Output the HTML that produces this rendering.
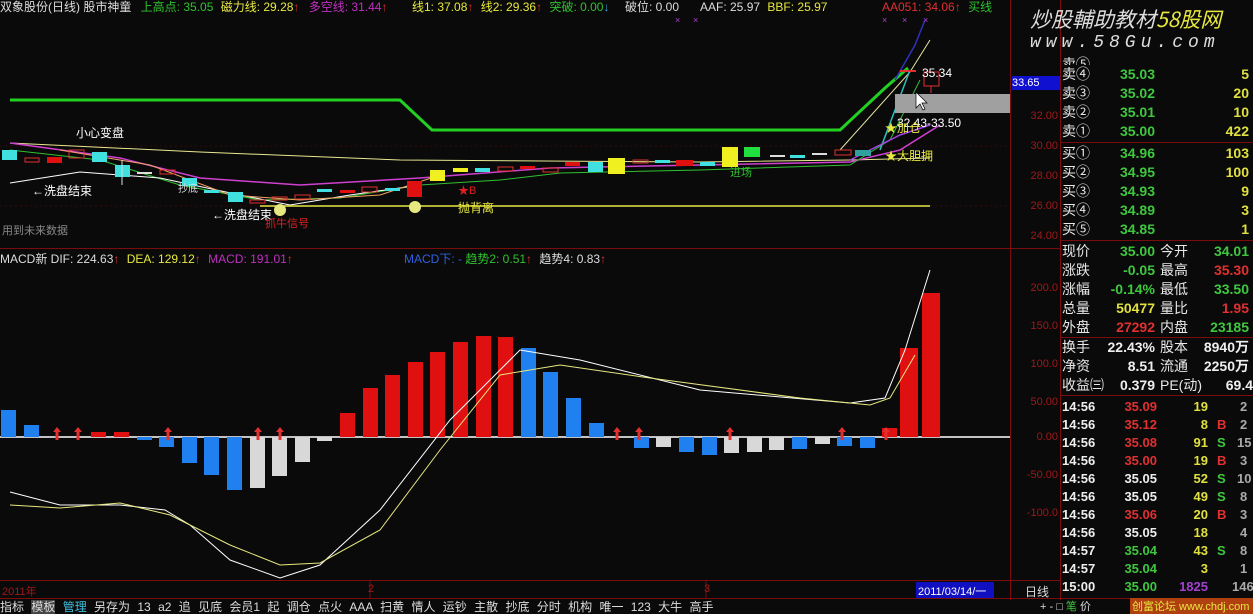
<!DOCTYPE html>
<html><head><meta charset="utf-8"><style>
*{margin:0;padding:0;box-sizing:border-box}
body{width:1253px;height:614px;background:#0a0a0a;overflow:hidden;position:relative;font-family:"Liberation Sans","Noto Sans CJK SC",sans-serif;font-size:12px;color:#ddd}
.a{position:absolute;white-space:nowrap}
.r{position:absolute;left:1062px;width:191px;height:19px;font-size:14px;line-height:19px}
.r span{position:absolute}
.lb{left:0;color:#e8e8e8}
.p{left:20px;width:73px;text-align:right;color:#3ec83e;font-weight:bold}
.v{right:4px;text-align:right;color:#e0e040;font-weight:bold}
.l2{left:98px;color:#e8e8e8}
.t{font-size:13px}
.t span{font-weight:bold}
.ax{position:absolute;left:1012px;width:46px;text-align:right;color:#a01818;font-size:11px}
</style></head><body>
<svg class="a" style="left:0;top:0" width="1253" height="614">
<g stroke="#3a0808" stroke-width="1">
<line x1="0" y1="146" x2="1010" y2="146" stroke-dasharray="2 3"/>
<line x1="0" y1="206" x2="1010" y2="206" stroke-dasharray="2 3"/>
</g>
<line x1="1010.5" y1="0" x2="1010.5" y2="600" stroke="#7a0c0c"/>
<line x1="1060.5" y1="0" x2="1060.5" y2="600" stroke="#7a0c0c"/>
<line x1="0" y1="248.5" x2="1060" y2="248.5" stroke="#7a0c0c"/>
<line x1="0" y1="580.5" x2="1060" y2="580.5" stroke="#7a0c0c"/>
<line x1="0" y1="598.5" x2="1253" y2="598.5" stroke="#7a0c0c"/>
<g stroke="#7a0c0c"><line x1="1060" y1="142.5" x2="1253" y2="142.5"/><line x1="1060" y1="240.5" x2="1253" y2="240.5"/><line x1="1060" y1="337.5" x2="1253" y2="337.5"/><line x1="1060" y1="395.5" x2="1253" y2="395.5"/></g>
<polyline fill="none" stroke="#22d022" stroke-width="3" points="10,100 400,100 432,130 840,130 885,88 908,68"/>
<polyline fill="none" stroke="#e8e890" stroke-width="1" points="10,143 200,152 400,160 700,162 850,160 930,158"/>
<polyline fill="none" stroke="#d040d0" stroke-width="1.5" points="10,143 120,158 200,178 300,185 420,178 550,168 700,165 850,162 900,150 940,125"/>
<polyline fill="none" stroke="#30c030" stroke-width="1" points="10,150 100,160 180,185 260,200 340,198 420,185 500,180 560,173 700,170 850,165 890,140 920,80"/>
<polyline fill="none" stroke="#ffffff" stroke-width="1" points="10,183 80,172 160,178 240,195 290,205 350,195 420,185"/>
<polyline fill="none" stroke="#f0a060" stroke-width="1" points="60,150 150,165 230,195 300,200 380,195 440,175"/>
<line x1="260" y1="206" x2="930" y2="206" stroke="#e8e840" stroke-width="1.5"/>
<polyline fill="none" stroke="#e8e8a0" stroke-width="1" points="840,150 910,72 930,40"/>
<polyline fill="none" stroke="#3030c0" stroke-width="1.5" points="895,80 915,45 925,20"/>
<polyline fill="none" stroke="#30c0c0" stroke-width="1.5" points="880,150 910,70"/>
<polyline fill="none" stroke="#a040e0" stroke-width="1.5" points="850,160 900,135 930,125"/>
<g>
<rect x="2" y="150" width="15" height="10" fill="#40e0e0"/>
<rect x="25" y="158" width="14" height="4" fill="none" stroke="#e03030"/>
<rect x="47" y="157" width="15" height="6" fill="#e01010"/>
<rect x="69" y="150" width="15" height="8" fill="none" stroke="#e03030"/>
<rect x="92" y="152" width="15" height="10" fill="#40e0e0"/>
<rect x="115" y="165" width="15" height="12" fill="#40e0e0"/>
<line x1="122" y1="160" x2="122" y2="185" stroke="#ddd"/>
<rect x="137" y="172" width="15" height="2" fill="#ddd"/>
<rect x="160" y="170" width="15" height="4" fill="none" stroke="#e03030"/>
<rect x="182" y="178" width="15" height="8" fill="#40e0e0"/>
<rect x="204" y="190" width="15" height="3" fill="#40e0e0"/>
<rect x="228" y="192" width="15" height="10" fill="#40e0e0"/>
<rect x="250" y="200" width="15" height="3" fill="none" stroke="#e03030"/>
<rect x="272" y="197" width="15" height="3" fill="none" stroke="#e03030"/>
<rect x="295" y="195" width="15" height="4" fill="none" stroke="#e03030"/>
<rect x="317" y="189" width="15" height="3" fill="#40e0e0"/>
<rect x="340" y="190" width="15" height="3" fill="#e01010"/>
<rect x="362" y="187" width="15" height="5" fill="none" stroke="#e03030"/>
<rect x="385" y="188" width="15" height="3" fill="#40e0e0"/>
<rect x="407" y="181" width="15" height="16" fill="#e01010"/>
<rect x="430" y="170" width="15" height="11" fill="#f0f020"/>
<rect x="453" y="168" width="15" height="4" fill="#f0f020"/>
<rect x="475" y="168" width="15" height="4" fill="#40e0e0"/>
<rect x="498" y="167" width="15" height="4" fill="none" stroke="#e03030"/>
<rect x="520" y="166" width="15" height="3" fill="#e01010"/>
<rect x="543" y="168" width="15" height="4" fill="none" stroke="#e03030"/>
<rect x="565" y="162" width="15" height="4" fill="#e01010"/>
<rect x="588" y="162" width="15" height="10" fill="#40e0e0"/>
<rect x="608" y="158" width="17" height="16" fill="#f0f020"/>
<rect x="633" y="160" width="15" height="3" fill="none" stroke="#e03030"/>
<rect x="655" y="160" width="15" height="3" fill="#40e0e0"/>
<rect x="676" y="160" width="17" height="6" fill="#e01010"/>
<rect x="700" y="162" width="15" height="4" fill="#40e0e0"/>
<rect x="722" y="147" width="16" height="20" fill="#f0f020"/>
<rect x="744" y="147" width="16" height="10" fill="#20e040"/>
<rect x="770" y="155" width="15" height="2" fill="#ddd"/>
<rect x="790" y="155" width="15" height="3" fill="#40e0e0"/>
<rect x="812" y="153" width="15" height="2" fill="#ddd"/>
<rect x="835" y="150" width="16" height="5" fill="none" stroke="#e03030"/>
<rect x="855" y="150" width="16" height="6" fill="#30a0a0"/>
<rect x="900" y="70" width="16" height="2" fill="#e03030"/>
<rect x="924" y="72" width="15" height="14" fill="none" stroke="#e03030"/>
<line x1="931" y1="86" x2="931" y2="93" stroke="#e03030"/>
</g>
<circle cx="280" cy="210" r="6" fill="#e8e880"/>
<circle cx="415" cy="207" r="6" fill="#e8e880"/>
<rect x="895" y="94" width="115" height="19" fill="#a0a0a0"/>
<path d="M916 92 L916 108 L920 104 L923 110 L925 109 L922 103 L927 103 Z" fill="#fff" stroke="#000" stroke-width=".7"/>
<g fill="#b040d0" font-size="9"><text x="675" y="23">×</text><text x="693" y="23">×</text><text x="882" y="23">×</text><text x="902" y="23">×</text><text x="923" y="23">×</text></g>
<line x1="0" y1="437" x2="1010" y2="437" stroke="#fff" stroke-width="1.5"/>
<g>
<rect x="1" y="410" width="15" height="27" fill="#2080f0"/>
<rect x="24" y="425" width="15" height="12" fill="#2080f0"/>
<rect x="91" y="432" width="15" height="5" fill="#e01010"/>
<rect x="114" y="432" width="15" height="5" fill="#e01010"/>
<rect x="137" y="437" width="15" height="3" fill="#2080f0"/>
<rect x="159" y="437" width="15" height="10" fill="#2080f0"/>
<rect x="182" y="437" width="15" height="26" fill="#2080f0"/>
<rect x="204" y="437" width="15" height="38" fill="#2080f0"/>
<rect x="227" y="437" width="15" height="53" fill="#2080f0"/>
<rect x="250" y="437" width="15" height="51" fill="#d8d8d8"/>
<rect x="272" y="437" width="15" height="39" fill="#d8d8d8"/>
<rect x="295" y="437" width="15" height="25" fill="#d8d8d8"/>
<rect x="317" y="437" width="15" height="4" fill="#d8d8d8"/>
<rect x="340" y="413" width="15" height="24" fill="#e01010"/>
<rect x="363" y="388" width="15" height="49" fill="#e01010"/>
<rect x="385" y="375" width="15" height="62" fill="#e01010"/>
<rect x="408" y="362" width="15" height="75" fill="#e01010"/>
<rect x="430" y="352" width="15" height="85" fill="#e01010"/>
<rect x="453" y="342" width="15" height="95" fill="#e01010"/>
<rect x="476" y="336" width="15" height="101" fill="#e01010"/>
<rect x="498" y="337" width="15" height="100" fill="#e01010"/>
<rect x="521" y="348" width="15" height="89" fill="#2080f0"/>
<rect x="543" y="372" width="15" height="65" fill="#2080f0"/>
<rect x="566" y="398" width="15" height="39" fill="#2080f0"/>
<rect x="589" y="423" width="15" height="14" fill="#2080f0"/>
<rect x="634" y="437" width="15" height="11" fill="#2080f0"/>
<rect x="656" y="437" width="15" height="10" fill="#d8d8d8"/>
<rect x="679" y="437" width="15" height="15" fill="#2080f0"/>
<rect x="702" y="437" width="15" height="18" fill="#2080f0"/>
<rect x="724" y="437" width="15" height="16" fill="#d8d8d8"/>
<rect x="747" y="437" width="15" height="15" fill="#d8d8d8"/>
<rect x="769" y="437" width="15" height="13" fill="#d8d8d8"/>
<rect x="792" y="437" width="15" height="12" fill="#2080f0"/>
<rect x="815" y="437" width="15" height="7" fill="#d8d8d8"/>
<rect x="837" y="437" width="15" height="9" fill="#2080f0"/>
<rect x="860" y="437" width="15" height="11" fill="#2080f0"/>
<rect x="882" y="428" width="15" height="9" fill="#e01010"/>
<rect x="900" y="348" width="18" height="89" fill="#e01010"/>
<rect x="922" y="293" width="18" height="144" fill="#e01010"/>
</g>
<g fill="#e03030"><path d="M53 432 l4-5 l4 5 h-2.5 v8 h-3 v-8z"/><path d="M74 432 l4-5 l4 5 h-2.5 v8 h-3 v-8z"/><path d="M164 432 l4-5 l4 5 h-2.5 v8 h-3 v-8z"/><path d="M254 432 l4-5 l4 5 h-2.5 v8 h-3 v-8z"/><path d="M276 432 l4-5 l4 5 h-2.5 v8 h-3 v-8z"/><path d="M613 432 l4-5 l4 5 h-2.5 v8 h-3 v-8z"/><path d="M635 432 l4-5 l4 5 h-2.5 v8 h-3 v-8z"/><path d="M726 432 l4-5 l4 5 h-2.5 v8 h-3 v-8z"/><path d="M838 432 l4-5 l4 5 h-2.5 v8 h-3 v-8z"/><path d="M882 432 l4-5 l4 5 h-2.5 v8 h-3 v-8z"/></g>
<polyline fill="none" stroke="#ffffff" stroke-width="1" points="10,492 60,505 120,505 165,510 190,525 230,560 280,578 320,565 380,510 450,420 520,350 580,360 700,390 850,403 885,398 905,350 930,270"/>
<polyline fill="none" stroke="#e8e880" stroke-width="1" points="10,505 60,508 120,503 170,515 230,545 280,565 320,563 380,530 440,450 500,375 560,365 650,378 800,398 870,405 890,398 915,355"/>
<g stroke="#7a0c0c"><line x1="370" y1="580" x2="370" y2="598"/><line x1="706" y1="580" x2="706" y2="598"/></g>
<rect x="916" y="582" width="78" height="16" fill="#1010c0"/>
</svg>

<div class="a" style="left:0;top:0;font-size:12px;line-height:14px">
<span style="color:#ddd">双象股份(日线) 股市神童</span>
<span style="color:#30c030;margin-left:6px">上高点: 35.05</span>
<span style="color:#e8e840;margin-left:4px">磁力线: 29.28</span><span style="color:#e03030">↑</span>
<span style="color:#c030c0;margin-left:6px">多空线: 31.44</span><span style="color:#e03030">↑</span>
</div>
<div class="a" style="left:412px;top:0;line-height:14px"><span style="color:#e8e840">线1: 37.08</span><span style="color:#e03030">↑</span> <span style="color:#e8e840;margin-left:4px">线2: 29.36</span><span style="color:#e03030">↑</span> <span style="color:#30c030;margin-left:4px">突破: 0.00</span><span style="color:#40a0e0">↓</span></div>
<div class="a" style="left:625px;top:0;line-height:14px;color:#ddd">破位: 0.00</div>
<div class="a" style="left:700px;top:0;line-height:14px"><span style="color:#ddd">AAF: 25.97</span> <span style="color:#e8e840;margin-left:4px">BBF: 25.97</span></div>
<div class="a" style="left:882px;top:0;line-height:14px"><span style="color:#e03030">AA051: 34.06</span><span style="color:#e03030">↑</span> <span style="color:#30c030;margin-left:4px">买</span><span style="color:#30c030">线</span></div>

<div class="a" style="left:76px;top:124px;color:#fff;font-size:12px">小心变盘</div>
<div class="a" style="left:32px;top:182px;color:#fff;font-size:12px">←洗盘结束</div>
<div class="a" style="left:212px;top:206px;color:#fff;font-size:12px">←洗盘结束</div>
<div class="a" style="left:265px;top:215px;color:#e02020;font-size:11px">抓牛信号</div>
<div class="a" style="left:178px;top:180px;color:#ddd;font-size:10px">抄底</div>
<div class="a" style="left:2px;top:222px;color:#888;font-size:11px">用到未来数据</div>
<div class="a" style="left:458px;top:182px;color:#e02020;font-size:11px">★B</div>
<div class="a" style="left:458px;top:199px;color:#e8e840;font-size:12px">抛背离</div>
<div class="a" style="left:730px;top:164px;color:#30c030;font-size:11px">进场</div>
<div class="a" style="left:922px;top:66px;color:#fff;font-size:12px">35.34</div>
<div class="a" style="left:897px;top:116px;color:#fff;font-size:12px">32.43-33.50</div>
<div class="a" style="left:885px;top:119px;color:#e8e840;font-size:12px">★加仓</div>
<div class="a" style="left:885px;top:147px;color:#e8e840;font-size:12px">★大胆拥</div>

<div class="a" style="left:0;top:252px;line-height:14px;font-size:12px"><span style="color:#ddd">MACD新 DIF: 224.63</span><span style="color:#e03030">↑</span> <span style="color:#e8e840;margin-left:4px">DEA: 129.12</span><span style="color:#e03030">↑</span> <span style="color:#c030c0;margin-left:4px">MACD: 191.01</span><span style="color:#e03030">↑</span></div>
<div class="a" style="left:404px;top:252px;line-height:14px"><span style="color:#3060e0">MACD下: -</span> <span style="color:#30c030">趋势2: 0.51</span><span style="color:#e03030">↑</span> <span style="color:#ddd;margin-left:4px">趋势4: 0.83</span><span style="color:#e03030">↑</span></div>

<div class="a" style="left:1012px;top:76px;width:48px;height:14px;background:#1010d0;color:#fff;font-size:11px;line-height:14px">33.65</div>
<div class="ax" style="top:110px">32.00</div><div class="ax" style="top:140px">30.00</div><div class="ax" style="top:170px">28.00</div><div class="ax" style="top:200px">26.00</div><div class="ax" style="top:230px">24.00</div>
<div class="ax" style="top:282px">200.0</div><div class="ax" style="top:320px">150.0</div><div class="ax" style="top:358px">100.0</div><div class="ax" style="top:396px">50.00</div><div class="ax" style="top:431px">0.00</div><div class="ax" style="top:469px">-50.00</div><div class="ax" style="top:507px">-100.0</div>
<div class="a" style="left:2px;top:583px;color:#a01818;font-size:11px">2011年</div>
<div class="a" style="left:368px;top:583px;color:#a01818;font-size:11px">2</div>
<div class="a" style="left:704px;top:583px;color:#a01818;font-size:11px">3</div>
<div class="a" style="left:918px;top:583px;color:#fff;font-size:11px">2011/03/14/一</div>
<div class="a" style="left:1025px;top:583px;color:#ddd;font-size:12px">日线</div>

<div class="a" style="left:1030px;top:4px;font-size:21px;font-style:italic;color:#ddd;font-family:'Noto Sans CJK SC',sans-serif">炒股輔助教材<span style="color:#e8e840">58股网</span></div>
<div class="a" style="left:1030px;top:33px;font-size:18px;font-style:italic;color:#ddd;letter-spacing:5px;font-family:'Liberation Mono',monospace">www.58Gu.com</div>

<div class="r" style="top:55px;height:10px;overflow:hidden"><span class="lb">卖⑤</span></div>
<div class="r" style="top:65px"><span class="lb">卖④</span><span class="p">35.03</span><span class="v">5</span></div>
<div class="r" style="top:84px"><span class="lb">卖③</span><span class="p">35.02</span><span class="v">20</span></div>
<div class="r" style="top:103px"><span class="lb">卖②</span><span class="p">35.01</span><span class="v">10</span></div>
<div class="r" style="top:122px"><span class="lb">卖①</span><span class="p">35.00</span><span class="v">422</span></div>
<div class="r" style="top:144px"><span class="lb">买①</span><span class="p">34.96</span><span class="v">103</span></div>
<div class="r" style="top:163px"><span class="lb">买②</span><span class="p">34.95</span><span class="v">100</span></div>
<div class="r" style="top:182px"><span class="lb">买③</span><span class="p">34.93</span><span class="v">9</span></div>
<div class="r" style="top:201px"><span class="lb">买④</span><span class="p">34.89</span><span class="v">3</span></div>
<div class="r" style="top:220px"><span class="lb">买⑤</span><span class="p">34.85</span><span class="v">1</span></div>
<div class="r" style="top:242px"><span class="lb">现价</span><span class="p">35.00</span><span class="l2">今开</span><span class="v" style="color:#3ec83e">34.01</span></div>
<div class="r" style="top:261px"><span class="lb">涨跌</span><span class="p">-0.05</span><span class="l2">最高</span><span class="v" style="color:#e03030">35.30</span></div>
<div class="r" style="top:280px"><span class="lb">涨幅</span><span class="p">-0.14%</span><span class="l2">最低</span><span class="v" style="color:#3ec83e">33.50</span></div>
<div class="r" style="top:299px"><span class="lb">总量</span><span class="p" style="color:#e0e040">50477</span><span class="l2">量比</span><span class="v" style="color:#e03030">1.95</span></div>
<div class="r" style="top:318px"><span class="lb">外盘</span><span class="p" style="color:#e03030">27292</span><span class="l2">内盘</span><span class="v" style="color:#3ec83e">23185</span></div>
<div class="r" style="top:338px"><span class="lb">换手</span><span class="p" style="color:#eee">22.43%</span><span class="l2">股本</span><span class="v" style="color:#eee">8940万</span></div>
<div class="r" style="top:357px"><span class="lb">净资</span><span class="p" style="color:#eee">8.51</span><span class="l2">流通</span><span class="v" style="color:#eee">2250万</span></div>
<div class="r" style="top:376px"><span class="lb">收益㈢</span><span class="p" style="color:#eee;left:45px;width:48px">0.379</span><span class="l2">PE(动)</span><span class="v" style="color:#eee;right:0">69.4</span></div>

<div class="r t" style="top:397px"><span class="lb" style="color:#eee">14:56</span><span class="p" style="left:45px;width:50px;color:#e03030">35.09</span><span class="v" style="right:45px">19</span><span style="left:178px;color:#aaa">2</span></div>
<div class="r t" style="top:415px"><span class="lb" style="color:#eee">14:56</span><span class="p" style="left:45px;width:50px;color:#e03030">35.12</span><span class="v" style="right:45px">8</span><span style="left:155px;color:#e03030">B</span><span style="left:178px;color:#aaa">2</span></div>
<div class="r t" style="top:433px"><span class="lb" style="color:#eee">14:56</span><span class="p" style="left:45px;width:50px;color:#e03030">35.08</span><span class="v" style="right:45px">91</span><span style="left:155px;color:#3ec83e">S</span><span style="left:175px;color:#aaa">15</span></div>
<div class="r t" style="top:451px"><span class="lb" style="color:#eee">14:56</span><span class="p" style="left:45px;width:50px;color:#e03030">35.00</span><span class="v" style="right:45px">19</span><span style="left:155px;color:#e03030">B</span><span style="left:178px;color:#aaa">3</span></div>
<div class="r t" style="top:469px"><span class="lb" style="color:#eee">14:56</span><span class="p" style="left:45px;width:50px;color:#eee">35.05</span><span class="v" style="right:45px">52</span><span style="left:155px;color:#3ec83e">S</span><span style="left:175px;color:#aaa">10</span></div>
<div class="r t" style="top:487px"><span class="lb" style="color:#eee">14:56</span><span class="p" style="left:45px;width:50px;color:#eee">35.05</span><span class="v" style="right:45px">49</span><span style="left:155px;color:#3ec83e">S</span><span style="left:178px;color:#aaa">8</span></div>
<div class="r t" style="top:505px"><span class="lb" style="color:#eee">14:56</span><span class="p" style="left:45px;width:50px;color:#e03030">35.06</span><span class="v" style="right:45px">20</span><span style="left:155px;color:#e03030">B</span><span style="left:178px;color:#aaa">3</span></div>
<div class="r t" style="top:523px"><span class="lb" style="color:#eee">14:56</span><span class="p" style="left:45px;width:50px;color:#eee">35.05</span><span class="v" style="right:45px">18</span><span style="left:178px;color:#aaa">4</span></div>
<div class="r t" style="top:541px"><span class="lb" style="color:#eee">14:57</span><span class="p" style="left:45px;width:50px">35.04</span><span class="v" style="right:45px">43</span><span style="left:155px;color:#3ec83e">S</span><span style="left:178px;color:#aaa">8</span></div>
<div class="r t" style="top:559px"><span class="lb" style="color:#eee">14:57</span><span class="p" style="left:45px;width:50px">35.04</span><span class="v" style="right:45px">3</span><span style="left:178px;color:#aaa">1</span></div>
<div class="r t" style="top:577px"><span class="lb" style="color:#eee">15:00</span><span class="p" style="left:45px;width:50px">35.00</span><span class="v" style="right:45px;color:#a040d0">1825</span><span style="left:170px;color:#aaa">146</span></div>

<div class="a" style="left:0;top:600px;font-size:12px;line-height:14px;color:#ddd;word-spacing:4px">指标 <span style="background:#444">模板</span> <span style="color:#40c0e0">管理</span> 另存为 13 a2 追 见底 会员1 起 调仓 点火 AAA 扫黄 情人 运钞 主散 抄底 分时 机构 唯一 123 大牛 高手</div>
<div class="a" style="left:1130px;top:598px;width:123px;height:16px;background:#b04010"></div>
<div class="a" style="left:1132px;top:600px;font-size:11px;color:#e8e840;line-height:14px">创富论坛 www.chdj.com</div>
<div class="a" style="left:1040px;top:600px;font-size:11px;color:#ddd;line-height:14px">+ - □ <span style="color:#3ec83e">笔</span> 价</div>
</body></html>
